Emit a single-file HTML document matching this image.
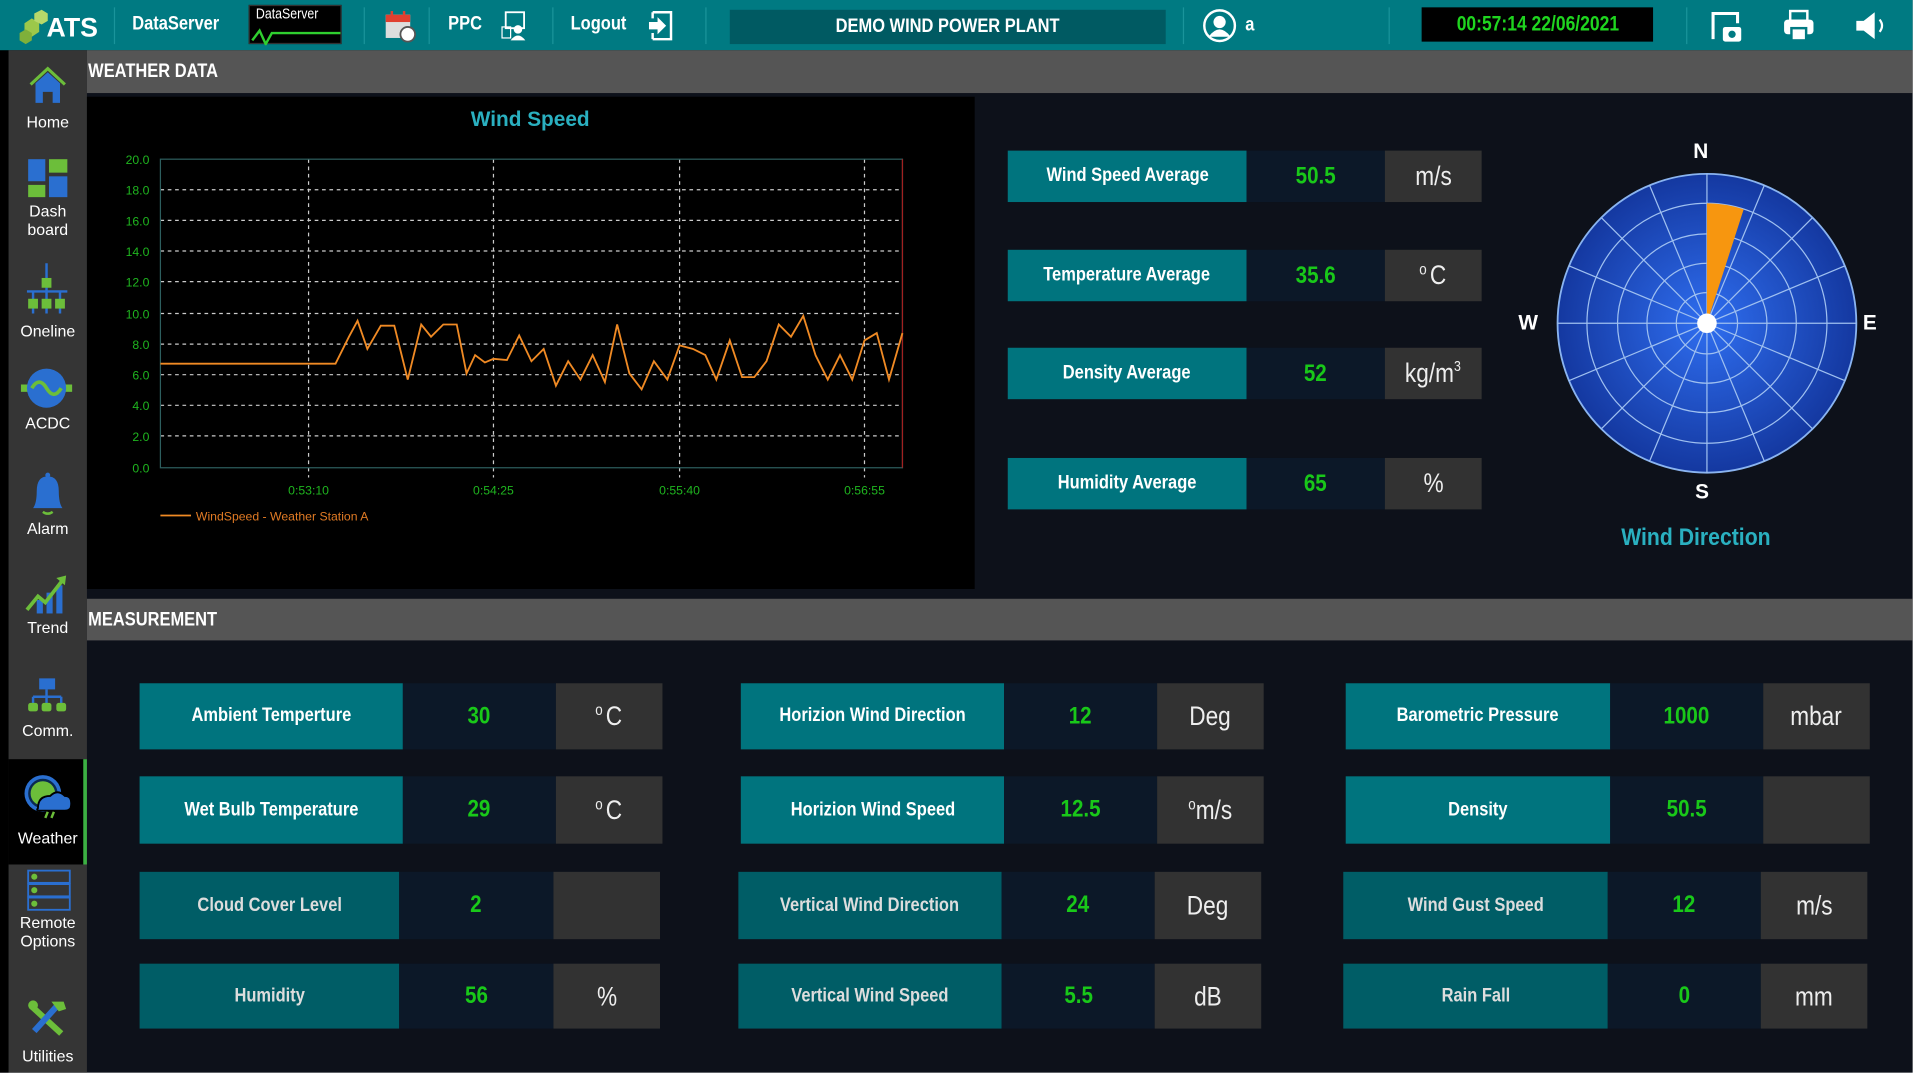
<!DOCTYPE html>
<html><head><meta charset="utf-8">
<style>
*{margin:0;padding:0;box-sizing:border-box}
html,body{width:1920px;height:1080px;overflow:hidden;background:#fff}
#st{position:absolute;left:0;top:0;width:1568px;height:882px;transform:scale(1.22449);transform-origin:0 0;background:#fff;font-family:"Liberation Sans Narrow","Liberation Sans",sans-serif}
.a{position:absolute}
.n{display:inline-block;transform:scaleX(.84);white-space:nowrap}
.nl{display:inline-block;transform:scaleX(.84);transform-origin:0 50%;white-space:nowrap}
.hd{left:0;top:0;width:1562px;height:41px;background:#007a82}
.ht{color:#fff;font-weight:bold;font-size:16px;top:11px}
.sep{top:6px;width:1px;height:30px;background:#1a949b}
.sb{left:7px;top:41px;width:64px;height:835px;background:#353535}
.si{color:#fff;font-family:"Liberation Sans",sans-serif;font-size:13px;text-align:center;width:64px;left:7px;line-height:15px}
.bar{background:#555;color:#fff;font-weight:bold;font-size:16px;padding-left:1px;line-height:36px}
.lb,.vl,.un{position:absolute;display:flex;align-items:center;justify-content:center}
.lb{background:#00747e;color:#fff;font-weight:bold;font-size:16px}
.lb.d{background:#005d66;color:#ddd}
.vl{background:#0c1828;color:#19c819;font-weight:bold;font-size:20px}
.un{background:#323232;color:#eee;font-size:22px}
.dg{position:relative;top:-8px;font-size:13px;margin-right:3px}
.sp{position:relative;top:-9px;font-size:12px}
</style></head><body><div id="st">
<div class="a" style="left:0;top:0;width:1562px;height:876px;background:#0d111a"></div>
<div class="a" style="left:0;top:0;width:7px;height:876px;background:#000"></div>
<div class="a hd"></div>
<svg class="a" style="left:14px;top:5px" width="70" height="32"><polygon points="6,14 12,10 18,14 18,21 12,25 6,21" fill="#9cc84a"/><polygon points="14,6 20,3 25,6 25,12 20,15 14,12" fill="#b6d86a"/><polygon points="2,22 7,19 12,22 12,28 7,31 2,28" fill="#7fb03a"/><text x="24" y="25" fill="#fff" font-size="22" font-weight="bold" font-family="Liberation Sans,sans-serif" textLength="42" lengthAdjust="spacingAndGlyphs">ATS</text></svg>
<div class="a sep" style="left:93px"></div>
<div class="a ht" style="left:108px"><span class="nl">DataServer</span></div>
<div class="a" style="left:203px;top:4px;width:76px;height:32px;background:#000;border:1px solid #333"><div style="color:#fff;font-size:12px;margin-left:5px;line-height:13px"><span class="nl">DataServer</span></div><svg width="76" height="20" class="a" style="top:12px;left:0"><polyline points="2,16 8,8 13,19 18,10 74,10" fill="none" stroke="#2fcf2f" stroke-width="2"/></svg></div>
<div class="a sep" style="left:297px"></div>
<svg class="a" style="left:313px;top:9px" width="28" height="26"><rect x="2" y="3" width="20" height="19" fill="#ddd"/><rect x="2" y="3" width="20" height="6" fill="#e04030"/><rect x="6" y="0" width="2" height="6" fill="#e04030"/><rect x="16" y="0" width="2" height="6" fill="#e04030"/><circle cx="20" cy="19" r="6" fill="#fff" stroke="#555" stroke-width="1.5"/></svg>
<div class="a sep" style="left:350px"></div>
<div class="a ht" style="left:366px"><span class="nl">PPC</span></div>
<svg class="a" style="left:408px;top:8px" width="26" height="26"><rect x="5" y="2" width="15" height="13" fill="none" stroke="#fff" stroke-width="1.5"/><circle cx="15" cy="16" r="3.5" fill="#fff"/><path d="M9 25 q6 -8 12 0z" fill="#fff"/><rect x="2" y="14" width="7" height="9" fill="none" stroke="#fff"/></svg>
<div class="a sep" style="left:451px"></div>
<div class="a ht" style="left:466px"><span class="nl">Logout</span></div>
<svg class="a" style="left:527px;top:8px" width="26" height="26"><path d="M6 2 h15 v22 h-15 M6 2 v5 M6 19 v5" fill="none" stroke="#fff" stroke-width="2"/><path d="M3 10 h7 v-4 l7 7 -7 7 v-4 h-7z" fill="#fff"/></svg>
<div class="a sep" style="left:576px"></div>
<div class="a" style="left:596px;top:8px;width:356px;height:28px;background:#005a62;color:#fff;font-weight:bold;font-size:16px;text-align:center;line-height:28px"><span class="n">DEMO WIND POWER PLANT</span></div>
<div class="a sep" style="left:966px"></div>
<svg class="a" style="left:982px;top:7px" width="28" height="28"><circle cx="14" cy="14" r="12.5" fill="none" stroke="#fff" stroke-width="2"/><circle cx="14" cy="11" r="5" fill="#fff"/><path d="M5 23 q9 -12 18 0z" fill="#fff"/></svg>
<div class="a ht" style="left:1017px;top:12px"><span class="nl">a</span></div>
<div class="a sep" style="left:1134px"></div>
<div class="a" style="left:1161px;top:6px;width:189px;height:28px;background:#000;color:#1fd51f;font-weight:bold;font-size:17px;text-align:center;line-height:28px"><span class="n">00:57:14 22/06/2021</span></div>
<div class="a sep" style="left:1377px"></div>
<svg class="a" style="left:1396px;top:8px" width="28" height="28"><path d="M3 24 v-21 h20 v8" fill="none" stroke="#fff" stroke-width="2.5"/><rect x="11" y="14" width="15" height="12" rx="2" fill="#fff"/><circle cx="18.5" cy="20" r="3" fill="#007a82"/></svg>
<svg class="a" style="left:1455px;top:7px" width="28" height="28"><rect x="7" y="2" width="14" height="8" fill="none" stroke="#fff" stroke-width="2"/><rect x="2" y="9" width="24" height="12" rx="3" fill="#fff"/><rect x="8" y="16" width="12" height="10" fill="#fff" stroke="#007a82" stroke-width="2"/></svg>
<svg class="a" style="left:1514px;top:8px" width="28" height="26"><path d="M2 9 h6 l9 -7 v22 l-9 -7 h-6z" fill="#fff"/><path d="M21 8 q4 5 0 10" fill="none" stroke="#fff" stroke-width="1.8"/></svg>

<div class="a sb"></div>
<div class="a" style="left:7px;top:620px;width:64px;height:86px;background:#000"></div>
<div class="a" style="left:68px;top:620px;width:3px;height:86px;background:#3cb043"></div>
<svg class="a" style="left:23px;top:53px" width="34" height="34"><path d="M2 16 L16 3 L30 16" fill="none" stroke="#6cbe3a" stroke-width="2.5"/><path d="M6 15 L16 6 L26 15 V31 H20 V22 H12 V31 H6Z" fill="#2a6fd0"/></svg>
<div class="a si" style="top:92px">Home</div>
<svg class="a" style="left:22px;top:129px" width="34" height="34"><rect x="1" y="1" width="14" height="18" fill="#2a6fd0"/><rect x="18" y="1" width="15" height="11" fill="#6cbe3a"/><rect x="1" y="22" width="14" height="10" fill="#6cbe3a"/><rect x="18" y="15" width="15" height="17" fill="#2a6fd0"/></svg>
<div class="a si" style="top:165px">Dash<br>board</div>
<svg class="a" style="left:20px;top:213px" width="38" height="46"><path d="M18 2 v15 M2 25 h33 M7 25 v18 M18 17 v26 M29 25 v18" stroke="#2a6fd0" stroke-width="2" fill="none"/><rect x="14" y="14" width="8" height="8" fill="#6cbe3a"/><rect x="3" y="31" width="8" height="8" fill="#6cbe3a"/><rect x="14" y="31" width="8" height="8" fill="#6cbe3a"/><rect x="25" y="31" width="8" height="8" fill="#6cbe3a"/></svg>
<div class="a si" style="top:263px">Oneline</div>
<svg class="a" style="left:17px;top:299px" width="42" height="36"><rect x="0" y="15" width="6" height="6" fill="#6cbe3a"/><rect x="36" y="15" width="6" height="6" fill="#6cbe3a"/><circle cx="21" cy="18" r="16" fill="#2a6fd0"/><path d="M9 18 q6 -10 12 0 q6 10 12 0" fill="none" stroke="#6cbe3a" stroke-width="3"/></svg>
<div class="a si" style="top:338px">ACDC</div>
<svg class="a" style="left:23px;top:383px" width="32" height="38"><path d="M4 32 q3 -4 3 -14 q0 -12 9 -12 q9 0 9 12 q0 10 3 14z" fill="#2a6fd0"/><circle cx="16" cy="5" r="2" fill="#2a6fd0"/><path d="M12 35 q4 3 8 0" stroke="#6cbe3a" stroke-width="2" fill="none"/></svg>
<div class="a si" style="top:424px">Alarm</div>
<svg class="a" style="left:20px;top:468px" width="36" height="34"><rect x="10" y="22" width="5" height="11" fill="#2a6fd0"/><rect x="18" y="16" width="5" height="17" fill="#2a6fd0"/><rect x="26" y="10" width="5" height="23" fill="#2a6fd0"/><path d="M2 30 L11 19 L17 24 L31 6" stroke="#6cbe3a" stroke-width="3" fill="none"/><path d="M26 4 L34 2 L33 10z" fill="#6cbe3a"/></svg>
<div class="a si" style="top:505px">Trend</div>
<svg class="a" style="left:22px;top:553px" width="34" height="32"><rect x="10" y="1" width="13" height="9" fill="#2a6fd0"/><path d="M16 10 v6 M5 16 h23 M5 16 v6 M16 16 v6 M28 16 v6" stroke="#2a6fd0" stroke-width="2" fill="none"/><rect x="1" y="21" width="8" height="7" rx="2" fill="#6cbe3a"/><rect x="12" y="21" width="8" height="7" rx="2" fill="#6cbe3a"/><rect x="24" y="21" width="8" height="7" rx="2" fill="#6cbe3a"/></svg>
<div class="a si" style="top:589px">Comm.</div>
<svg class="a" style="left:17px;top:630px" width="42" height="40"><circle cx="18" cy="18" r="15" fill="#2a6fd0"/><circle cx="18" cy="18" r="11" fill="#6cbe3a" stroke="#0b2a50" stroke-width="2"/><path d="M14 30 q0 -10 10 -10 q6 -6 12 0 q6 0 5 8 q0 4 -5 4 h-20 q-4 0 -2 -2z" fill="#2a6fd0" stroke="#000" stroke-width="1.5"/><path d="M22 33 l-2 5 M27 33 l-2 5" stroke="#6cbe3a" stroke-width="2"/></svg>
<div class="a si" style="top:677px">Weather</div>
<svg class="a" style="left:22px;top:710px" width="36" height="34"><rect x="1" y="1" width="34" height="10" fill="none" stroke="#2a6fd0" stroke-width="1.5"/><rect x="1" y="12" width="34" height="10" fill="none" stroke="#2a6fd0" stroke-width="1.5"/><rect x="1" y="23" width="34" height="10" fill="none" stroke="#2a6fd0" stroke-width="1.5"/><circle cx="6" cy="6" r="2.5" fill="#6cbe3a"/><circle cx="6" cy="17" r="2.5" fill="#6cbe3a"/><circle cx="6" cy="28" r="2.5" fill="#6cbe3a"/></svg>
<div class="a si" style="top:746px">Remote<br>Options</div>
<svg class="a" style="left:22px;top:816px" width="34" height="32"><path d="M4 6 L28 28" stroke="#6cbe3a" stroke-width="5"/><path d="M26 4 L6 26" stroke="#2a6fd0" stroke-width="5"/><path d="M20 2 h10 l2 6 -6 2z" fill="#6cbe3a"/><circle cx="5" cy="5" r="4" fill="#6cbe3a"/></svg>
<div class="a si" style="top:855px">Utilities</div>

<div class="a bar" style="left:71px;top:41px;width:1491px;height:35px"><span class="nl">WEATHER DATA</span></div>
<div class="a" style="left:71px;top:79px;width:725px;height:402px;background:#000"></div>
<svg class="a" style="left:0;top:0" width="800" height="482" font-family="Liberation Sans,sans-serif">
<text x="433" y="103" fill="#2ab0c0" font-size="17" font-weight="bold" text-anchor="middle">Wind Speed</text>
<g stroke="#ccc" stroke-width="1" stroke-dasharray="3,3">
<line x1="131" y1="155" x2="737" y2="155"/><line x1="131" y1="180" x2="737" y2="180"/><line x1="131" y1="205" x2="737" y2="205"/><line x1="131" y1="230" x2="737" y2="230"/><line x1="131" y1="256" x2="737" y2="256"/><line x1="131" y1="281" x2="737" y2="281"/><line x1="131" y1="306" x2="737" y2="306"/><line x1="131" y1="331" x2="737" y2="331"/><line x1="131" y1="356" x2="737" y2="356"/>
<line x1="252" y1="130" x2="252" y2="390"/><line x1="403" y1="130" x2="403" y2="390"/><line x1="555" y1="130" x2="555" y2="390"/><line x1="706" y1="130" x2="706" y2="390"/>
</g>
<rect x="131" y="130" width="606" height="252" fill="none" stroke="#2d5e5e"/>
<line x1="737" y1="130" x2="737" y2="382" stroke="#a02020"/>
<g fill="#1fb51f" font-size="10" text-anchor="end">
<text x="122" y="134">20.0</text><text x="122" y="159">18.0</text><text x="122" y="184">16.0</text><text x="122" y="209">14.0</text><text x="122" y="234">12.0</text><text x="122" y="260">10.0</text><text x="122" y="285">8.0</text><text x="122" y="310">6.0</text><text x="122" y="335">4.0</text><text x="122" y="360">2.0</text><text x="122" y="386">0.0</text>
</g>
<g fill="#1fb51f" font-size="10" text-anchor="middle"><text x="252" y="404">0:53:10</text><text x="403" y="404">0:54:25</text><text x="555" y="404">0:55:40</text><text x="706" y="404">0:56:55</text></g>
<polyline fill="none" stroke="#f08a24" stroke-width="1.5" points="131,297 274,297 285,275 292,262 300,285 311,266 322,266 333,310 344,265 352,275 362,265 373,265 381,305 388,290 396,296 403,293 414,294 424,274 434,295 444,285 454,315 464,295 474,310 484,290 494,312 504,265 514,305 524,318 534,295 545,310 555,282 566,285 576,290 585,310 596,278 606,308 616,308 626,295 636,265 646,275 656,258 666,290 676,310 686,290 696,310 706,278 716,272 726,310 737,272"/>
<line x1="131" y1="421" x2="156" y2="421" stroke="#f08a24" stroke-width="1.5"/>
<text x="160" y="425" fill="#e07a24" font-size="10">WindSpeed - Weather Station A</text>
</svg>

<div class="lb a" style="left:823px;top:123px;width:195px;height:42px"><span class="n">Wind Speed Average</span></div><div class="vl" style="left:1018px;top:123px;width:113px;height:42px"><span class="n">50.5</span></div><div class="un" style="left:1131px;top:123px;width:79px;height:42px"><span class="n">m/s</span></div>
<div class="lb a" style="left:823px;top:204px;width:195px;height:42px"><span class="n">Temperature Average</span></div><div class="vl" style="left:1018px;top:204px;width:113px;height:42px"><span class="n">35.6</span></div><div class="un" style="left:1131px;top:204px;width:79px;height:42px"><span class="n"><span class="dg">o</span>C</span></div>
<div class="lb a" style="left:823px;top:284px;width:195px;height:42px"><span class="n">Density Average</span></div><div class="vl" style="left:1018px;top:284px;width:113px;height:42px"><span class="n">52</span></div><div class="un" style="left:1131px;top:284px;width:79px;height:42px"><span class="n">kg/m<span class="sp">3</span></span></div>
<div class="lb a" style="left:823px;top:374px;width:195px;height:42px"><span class="n">Humidity Average</span></div><div class="vl" style="left:1018px;top:374px;width:113px;height:42px"><span class="n">65</span></div><div class="un" style="left:1131px;top:374px;width:79px;height:42px"><span class="n">%</span></div>

<svg class="a" style="left:1230px;top:105px" width="320" height="350" font-family="Liberation Sans,sans-serif">
<defs><radialGradient id="g"><stop offset="0" stop-color="#2f6ef0"/><stop offset="1" stop-color="#1438a0"/></radialGradient></defs>
<g transform="translate(164,159)">
<circle r="122" fill="url(#g)" stroke="#8ab4f0" stroke-width="1.5"/>
<g fill="none" stroke="#9fc0f0" stroke-width="1"><circle r="98"/><circle r="73"/><circle r="49"/><circle r="25"/></g>
<g stroke="#9fc0f0" stroke-width="1">
<line x1="0" y1="-122" x2="0" y2="122"/><line x1="-122" y1="0" x2="122" y2="0"/>
<line x1="-86" y1="-86" x2="86" y2="86"/><line x1="86" y1="-86" x2="-86" y2="86"/>
<line x1="-47" y1="-113" x2="47" y2="113"/><line x1="47" y1="-113" x2="-47" y2="113"/>
<line x1="-113" y1="-47" x2="113" y2="47"/><line x1="113" y1="-47" x2="-113" y2="47"/>
</g>
<path d="M0 0 L0 -98 A98 98 0 0 1 30 -93 Z" fill="#f7960f"/>
<circle r="8" fill="#fff"/>
</g>
<g fill="#fff" font-weight="bold" font-size="17" text-anchor="middle"><text x="159" y="24">N</text><text x="160" y="302">S</text><text x="18" y="164">W</text><text x="297" y="164">E</text></g>
<text x="155" y="340" fill="#2ab0c0" font-size="20" font-weight="bold" text-anchor="middle" textLength="122" lengthAdjust="spacingAndGlyphs">Wind Direction</text>
</svg>

<div class="a bar" style="left:71px;top:489px;width:1491px;height:34px;line-height:35px"><span class="nl">MEASUREMENT</span></div>

<div class="lb" style="left:114px;top:558px;width:215px;height:54px"><span class="n">Ambient Temperture</span></div><div class="vl" style="left:329px;top:558px;width:125px;height:54px"><span class="n">30</span></div><div class="un" style="left:454px;top:558px;width:87px;height:54px"><span class="n"><span class="dg">o</span>C</span></div>
<div class="lb" style="left:114px;top:634px;width:215px;height:55px"><span class="n">Wet Bulb Temperature</span></div><div class="vl" style="left:329px;top:634px;width:125px;height:55px"><span class="n">29</span></div><div class="un" style="left:454px;top:634px;width:87px;height:55px"><span class="n"><span class="dg">o</span>C</span></div>
<div class="lb d" style="left:114px;top:712px;width:212px;height:55px"><span class="n">Cloud Cover Level</span></div><div class="vl" style="left:326px;top:712px;width:126px;height:55px"><span class="n">2</span></div><div class="un" style="left:452px;top:712px;width:87px;height:55px"></div>
<div class="lb d" style="left:114px;top:787px;width:212px;height:53px"><span class="n">Humidity</span></div><div class="vl" style="left:326px;top:787px;width:126px;height:53px"><span class="n">56</span></div><div class="un" style="left:452px;top:787px;width:87px;height:53px"><span class="n">%</span></div>

<div class="lb" style="left:605px;top:558px;width:215px;height:54px"><span class="n">Horizion Wind Direction</span></div><div class="vl" style="left:820px;top:558px;width:125px;height:54px"><span class="n">12</span></div><div class="un" style="left:945px;top:558px;width:87px;height:54px"><span class="n">Deg</span></div>
<div class="lb" style="left:605px;top:634px;width:215px;height:55px"><span class="n">Horizion Wind Speed</span></div><div class="vl" style="left:820px;top:634px;width:125px;height:55px"><span class="n">12.5</span></div><div class="un" style="left:945px;top:634px;width:87px;height:55px"><span class="n"><span class="dg" style="margin-right:0">o</span>m/s</span></div>
<div class="lb d" style="left:603px;top:712px;width:215px;height:55px"><span class="n">Vertical Wind Direction</span></div><div class="vl" style="left:818px;top:712px;width:125px;height:55px"><span class="n">24</span></div><div class="un" style="left:943px;top:712px;width:87px;height:55px"><span class="n">Deg</span></div>
<div class="lb d" style="left:603px;top:787px;width:215px;height:53px"><span class="n">Vertical Wind Speed</span></div><div class="vl" style="left:818px;top:787px;width:125px;height:53px"><span class="n">5.5</span></div><div class="un" style="left:943px;top:787px;width:87px;height:53px"><span class="n">dB</span></div>

<div class="lb" style="left:1099px;top:558px;width:216px;height:54px"><span class="n">Barometric Pressure</span></div><div class="vl" style="left:1315px;top:558px;width:125px;height:54px"><span class="n">1000</span></div><div class="un" style="left:1440px;top:558px;width:87px;height:54px"><span class="n">mbar</span></div>
<div class="lb" style="left:1099px;top:634px;width:216px;height:55px"><span class="n">Density</span></div><div class="vl" style="left:1315px;top:634px;width:125px;height:55px"><span class="n">50.5</span></div><div class="un" style="left:1440px;top:634px;width:87px;height:55px"></div>
<div class="lb d" style="left:1097px;top:712px;width:216px;height:55px"><span class="n">Wind Gust Speed</span></div><div class="vl" style="left:1313px;top:712px;width:125px;height:55px"><span class="n">12</span></div><div class="un" style="left:1438px;top:712px;width:87px;height:55px"><span class="n">m/s</span></div>
<div class="lb d" style="left:1097px;top:787px;width:216px;height:53px"><span class="n">Rain Fall</span></div><div class="vl" style="left:1313px;top:787px;width:125px;height:53px"><span class="n">0</span></div><div class="un" style="left:1438px;top:787px;width:87px;height:53px"><span class="n">mm</span></div>
</div></body></html>
